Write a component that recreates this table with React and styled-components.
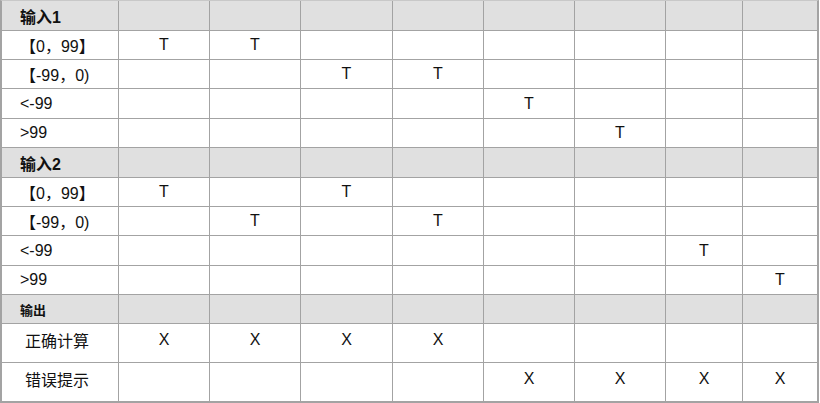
import React from 'react';
import styled, { createGlobalStyle } from 'styled-components';

const GlobalStyle = createGlobalStyle`
    html, body {
        margin: 0;
        padding: 0;
        background: #ffffff;
    }
`;

const Table = styled.div`
    display: grid;
    width: 819px;
    box-sizing: border-box;
    grid-template-columns: 116px 90px 90px 91px 90px 90px 90px 76px 74px;
    grid-template-rows: 29px 28px 28px 29px 28px 29px 28px 28px 29px 28px 28px 38px 38px;
    gap: 1px;
    background: #a3a3a3;
    border-top: 1px solid #c8c8c8;
    border-left: 2px solid #a3a3a3;
    border-right: 2px solid #a3a3a3;
    border-bottom: 2px solid #a3a3a3;
    font-family: "Liberation Sans", "Noto Sans CJK SC", sans-serif;
    color: #111111;
`;

const Cell = styled.div`
    display: flex;
    align-items: center;
    justify-content: center;
    background: ${props => props.$head ? '#e0e0e0' : '#ffffff'};
    font-size: 16px;
    padding-bottom: ${props => props.$tall ? '7px' : '0'};
    box-sizing: border-box;
`;

const Label = styled.div`
    display: flex;
    align-items: center;
    background: ${props => props.$head ? '#e0e0e0' : '#ffffff'};
    padding-left: ${props => props.$tall ? '23px' : '18px'};
    padding-bottom: ${props => props.$tall ? '7px' : '0'};
    font-size: ${props => props.$size}px;
    font-weight: ${props => props.$head ? 700 : 400};
    white-space: nowrap;
    box-sizing: border-box;
`;

const COLS = 8;

const rows = [
    { label: '输入1', head: true, size: 16 },
    { label: '【0，99】', mark: 'T', at: [1, 2] },
    { label: '【-99，0)', mark: 'T', at: [3, 4] },
    { label: '<-99', mark: 'T', at: [5] },
    { label: '>99', mark: 'T', at: [6] },
    { label: '输入2', head: true, size: 16 },
    { label: '【0，99】', mark: 'T', at: [1, 3] },
    { label: '【-99，0)', mark: 'T', at: [2, 4] },
    { label: '<-99', mark: 'T', at: [7] },
    { label: '>99', mark: 'T', at: [8] },
    { label: '输出', head: true, size: 13 },
    { label: '正确计算', mark: 'X', at: [1, 2, 3, 4], tall: true },
    { label: '错误提示', mark: 'X', at: [5, 6, 7, 8], tall: true },
];

function Row({ row }) {
    const cells = [];
    for (let i = 1; i <= COLS; i++) {
        const on = row.at && row.at.includes(i);
        cells.push(
            <Cell key={i} $head={row.head} $tall={row.tall}>
                {on ? row.mark : ''}
            </Cell>
        );
    }
    return (
        <>
            <Label $head={row.head} $tall={row.tall} $size={row.size || 16}>
                {row.label}
            </Label>
            {cells}
        </>
    );
}

export default function App() {
    return (
        <>
            <GlobalStyle />
            <Table>
                {rows.map((row, i) => <Row key={i} row={row} />)}
            </Table>
        </>
    );
}
